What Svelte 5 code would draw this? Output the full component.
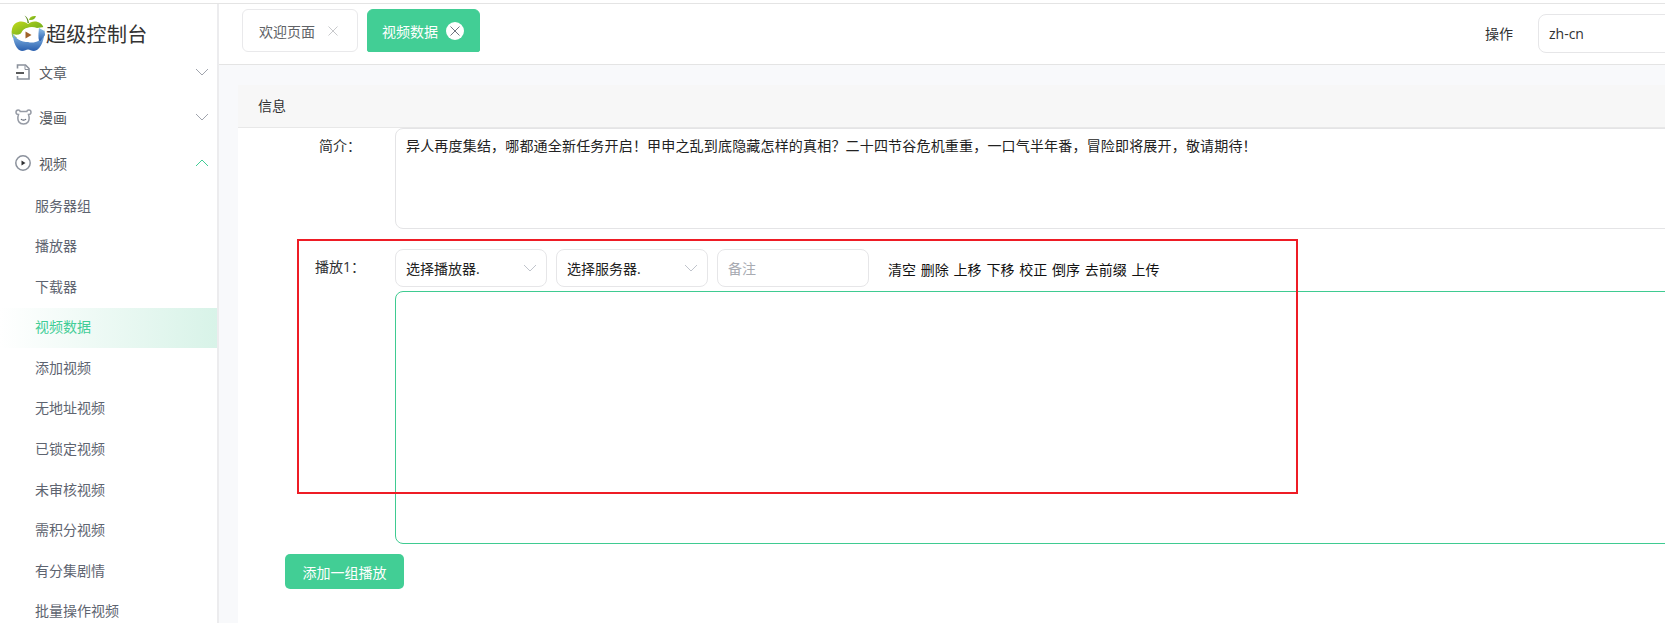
<script lang="ts">
	const parents = [
		{ name: '文章', icon: 'doc', open: false },
		{ name: '漫画', icon: 'bear', open: false },
		{ name: '视频', icon: 'play', open: true }
	];
	const children = ['服务器组', '播放器', '下载器', '视频数据', '添加视频', '无地址视频', '已锁定视频', '未审核视频', '需积分视频', '有分集剧情', '批量操作视频'];
	const actions = ['清空', '删除', '上移', '下移', '校正', '倒序', '去前缀', '上传'];
	const intro = '异人再度集结，哪都通全新任务开启！甲申之乱到底隐藏怎样的真相？二十四节谷危机重重，一口气半年番，冒险即将展开，敬请期待！';
</script>

<div class="shell" lang="zh-CN">
	<aside class="side">
		<div class="logo">
			<svg width="34" height="38" viewBox="0 0 34 38">
				<defs>
					<linearGradient id="leaf" x1="0" y1="0" x2="1" y2="1">
						<stop offset="0" stop-color="#c4dc1c" />
						<stop offset="1" stop-color="#4f9a1e" />
					</linearGradient>
					<linearGradient id="sea" x1="0" y1="0" x2="0" y2="1">
						<stop offset="0" stop-color="#8fc0ea" />
						<stop offset="1" stop-color="#2a5fae" />
					</linearGradient>
				</defs>
				<path d="M17 10C13 6 3 6 1 15c-1 4 0 7 1 9l30 0c2-3 2-6 1-9C31 6 21 6 17 10z" fill="url(#leaf)" />
				<path d="M1.500 19C2 28 6 37 11 37c3 0 4-1.500 6-1.500S20 37 23 37c5 0 10-9 10.500-18C30 25 24 28 17 28 10 28 5 25 1.500 19z" fill="url(#sea)" />
				<path d="M2 20c5 2 8 0 10-3 3-4 9-5 14-3l7-1c1 3 1 6 0 8-3 6-10 9-16 7C12 27 7 26 2 20z" fill="#fff" />
				<path d="M28 14l5.500 3 .5 4-4.500 6c-3 1-2-9-1.500-13z" fill="url(#sea)" />
				<circle cx="17" cy="21" r="7" fill="#fff" />
				<path d="M14.500 17.500l6 3.500-6 3.500z" fill="#a0622a" />
				<path d="M16.500 9c0-3-1-5-3-7.500 2 1 4 3 4.500 7.500z" fill="#5b8a1e" />
				<path d="M18 6c.5-3 3-4.500 7-4-1 3-3 4.500-7 4z" fill="url(#leaf)" />
			</svg>
			<span class="logo-text">超级控制台</span>
		</div>

		{#each parents as item}
			<div class="parent" class:open={item.open}>
				<span class="picon">
					{#if item.icon === 'doc'}
						<svg width="16" height="16" viewBox="0 0 16 16" fill="none" stroke="#8b919c" stroke-width="1.600">
							<path d="M2.500 4.500V1h8l3.500 3.500V15H2.500v-3" />
							<path d="M1 9h8" stroke="#303133" />
							<path d="M10 1.500V5.500h4" stroke-width="1" />
						</svg>
					{:else if item.icon === 'bear'}
						<svg width="17" height="16" viewBox="0 0 17 16" fill="none" stroke="#969ba5" stroke-width="1.500">
							<path d="M3.500 5.500C2 5.500 1 4.500 1 3.200 1 2 2 1 3.200 1c1 0 1.800.5 2 1.500h6.600c.2-1 1-1.500 2-1.500C15 1 16 2 16 3.200c0 1.300-1 2.300-2.500 2.300 1 3 .8 5.500-.5 7.500-1 1.500-2.800 2-4.500 2s-3.500-.5-4.500-2c-1.300-2-1.500-4.500-.5-7.500z" />
							<path d="M6 10c1 1.500 4 1.500 5 0" stroke="#5b6270" stroke-width="1.200" />
						</svg>
					{:else}
						<svg width="16" height="16" viewBox="0 0 16 16">
							<circle cx="8" cy="8" r="7.200" fill="none" stroke="#8b919c" stroke-width="1.500" />
							<path d="M6.500 5.500l4 2.500-4 2.500z" fill="#303133" />
						</svg>
					{/if}
				</span>
				<span class="pname">{item.name}</span>
				<svg class="chev" class:up={item.open} width="14" height="8" viewBox="0 0 14 8" fill="none" stroke="currentColor">
					<path d="M1 1l6 6 6-6" />
				</svg>
			</div>
		{/each}

		{#each children as child}
			<div class="child" class:active={child === '视频数据'}>{child}</div>
		{/each}
	</aside>

	<main class="main">
		<header class="top">
			<div class="tab">
				欢迎页面
				<svg width="12" height="12" viewBox="0 0 12 12" stroke="#c8c9cc" fill="none"><path d="M1.500 1.500l9 9M10.500 1.500l-9 9" /></svg>
			</div>
			<div class="tab on">
				视频数据
				<span class="closer">
					<svg width="12" height="12" viewBox="0 0 12 12" stroke="#6f7480" fill="none"><path d="M1.500 1.500l9 9M10.500 1.500l-9 9" /></svg>
				</span>
			</div>
			<div class="lang">
				<span>操作</span>
				<div class="lang-box">zh-cn</div>
			</div>
		</header>

		<section class="page">
			<div class="card">
				<div class="card-head">信息</div>
				<div class="card-body">
					<div class="row first">
						<div class="label">简介：</div>
						<textarea class="intro" readonly value={intro}></textarea>
					</div>

					<div class="row play">
						<div class="label">播放1：</div>
						<div class="play-right">
							<div class="controls">
								<div class="select">选择播放器.
									<svg width="14" height="8" viewBox="0 0 14 8" fill="none" stroke="#c0c4cc"><path d="M1 1l6 6 6-6" /></svg>
								</div>
								<div class="select">选择服务器.
									<svg width="14" height="8" viewBox="0 0 14 8" fill="none" stroke="#c0c4cc"><path d="M1 1l6 6 6-6" /></svg>
								</div>
								<input class="note" placeholder="备注" />
								<div class="actions">
									{#each actions as a}
										<span>{a}</span>
									{/each}
								</div>
							</div>
							<textarea class="urls"></textarea>
						</div>
					</div>

					<button class="add">添加一组播放</button>
				</div>
			</div>
		</section>
	</main>

	<div class="mark"></div>
</div>

<style>
	:global(body) {
		margin: 0;
		overflow: hidden;
		background: #fff;
	}

	.shell {
		position: relative;
		display: flex;
		height: 619px;
		width: 1665px;
		overflow: hidden;
		border-top: 1px solid #e4e4e4;
		margin-top: 3px;
		font-family: "Open Sans", "Noto Sans CJK SC", sans-serif;
		font-size: 14px;
		font-kerning: none;
		color: #303133;
	}

	.side {
		flex: 0 0 217px;
		border-right: 2px solid #ececee;
		overflow: hidden;
	}

	.logo {
		display: flex;
		align-items: flex-end;
		height: 46.500px;
		padding-left: 11px;
		box-sizing: border-box;
		gap: 1px;
		margin-bottom: -1px;
	}

	.logo svg {
		flex: none;
		margin-bottom: -1px;
	}

	.logo-text {
		font-size: 20px;
		letter-spacing: 0.300px;
		line-height: 30px;
		margin-bottom: 1px;
		color: #333;
	}

	.parent {
		display: flex;
		align-items: center;
		height: 45px;
		padding-left: 15px;
		color: #55595f;
	}

	.parent.open {
		margin-top: 0.500px;
		margin-bottom: 1.500px;
	}

	.picon {
		display: flex;
		width: 24px;
	}

	.pname {
		flex: 1;
	}

	.chev {
		color: #a0a4ad;
		margin-right: 8px;
	}

	.chev.up {
		color: #42cd96;
		transform: rotate(180deg);
	}

	.child {
		height: 40.600px;
		line-height: 38px;
		padding-left: 35px;
		color: #5e6470;
	}

	.child.active {
		color: #42cd96;
		background: linear-gradient(90deg, #fff 0%, #d8f3e8 100%);
		height: 40px;
		margin-bottom: 0.600px;
	}

	.main {
		flex: 1;
		min-width: 0;
		background: #f8f9fb;
	}

	.top {
		display: flex;
		align-items: flex-start;
		height: 55px;
		background: #fff;
		border-bottom: 1px solid #e4e4e4;
		padding: 5px 0 0 23px;
		gap: 9px;
	}

	.tab {
		display: flex;
		align-items: center;
		box-sizing: border-box;
		height: 43px;
		width: 116px;
		padding-left: 16px;
		gap: 12px;
		border: 1px solid #e9e9eb;
		border-radius: 6px;
		color: #606266;
	}

	.tab.on {
		width: 113px;
		background: #42ce95;
		border-color: #42ce95;
		border-radius: 6px 6px 2px 2px;
		color: #fff;
		gap: 8px;
		padding-left: 14px;
	}

	.closer {
		display: flex;
		align-items: center;
		justify-content: center;
		width: 18px;
		height: 18px;
		border-radius: 50%;
		background: #fff;
	}

	.lang {
		display: flex;
		align-items: center;
		gap: 25px;
		margin-left: auto;
		margin-right: -100px;
		padding-top: 5px;
	}

	.lang span {
		margin-top: -2px;
	}

	.lang-box {
		box-sizing: border-box;
		width: 227px;
		height: 39px;
		line-height: 37px;
		padding-left: 10px;
		border: 1px solid #e6e6e8;
		border-radius: 8px;
	}

	.page {
		padding: 20px 0 0 19px;
	}

	.card {
		width: 1600px;
		height: 560px;
		background: #fff;
	}

	.card-head {
		height: 42px;
		line-height: 42px;
		padding-left: 20px;
		background: #f7f7f7;
		border-bottom: 1px solid #e8e8e8;
	}

	.card-body {
		padding-left: 47px;
	}

	.row {
		display: flex;
		gap: 8px;
	}

	.label {
		flex: 0 0 102px;
		text-align: center;
		line-height: 20px;
		box-sizing: border-box;
		padding-left: 8px;
	}

	.first .label {
		padding-top: 8px;
	}

	textarea {
		display: block;
		box-sizing: border-box;
		width: 1400px;
		resize: none;
		outline: none;
		font: inherit;
		border-radius: 8px;
		margin: 0;
	}

	.intro {
		height: 101px;
		padding: 7px 10px;
		line-height: 20px;
		letter-spacing: 0.180px;
		border: 1px solid #e4e4e6;
		color: #222;
	}

	.play {
		margin-top: 20px;
	}

	.play .label {
		padding-top: 8px;
	}

	.controls {
		display: flex;
		align-items: center;
		gap: 9px;
		height: 38px;
		margin-bottom: 4px;
	}

	.select {
		display: flex;
		align-items: center;
		justify-content: space-between;
		box-sizing: border-box;
		width: 152px;
		height: 38px;
		padding: 0 9px 0 10px;
		border: 1px solid #e6e6e8;
		border-radius: 8px;
		color: #222;
	}

	.note {
		box-sizing: border-box;
		width: 152px;
		height: 38px;
		padding: 0 10px;
		border: 1px solid #e6e6e8;
		border-radius: 8px;
		font: inherit;
		outline: none;
	}

	.note::placeholder {
		color: #a8abb2;
	}

	.actions {
		display: flex;
		gap: 4.800px;
		margin-left: 10px;
		padding-top: 2px;
		color: #111;
	}

	.urls {
		height: 253px;
		border: 1px solid #3fcb91;
	}

	.add {
		display: block;
		width: 119px;
		height: 35px;
		margin-top: 10px;
		padding: 0;
		border: none;
		border-radius: 5px;
		background: #42ce95;
		color: #fff;
		font: inherit;
	}

	.mark {
		position: absolute;
		left: 297px;
		top: 235px;
		width: 1001px;
		height: 255px;
		box-sizing: border-box;
		border: 2px solid #ee1c25;
		pointer-events: none;
	}
</style>
